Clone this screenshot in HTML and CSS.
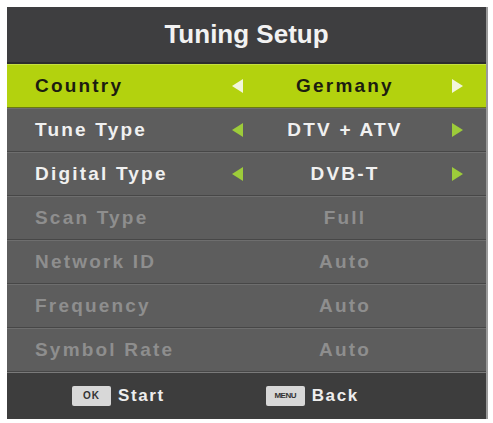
FILE: index.html
```html
<!DOCTYPE html>
<html lang="en">

<head>
    <meta charset="UTF-8">
    <meta name="viewport" content="width=device-width, initial-scale=1.0">
    <title>Tuning Setup</title>
    <link rel="stylesheet" href="styles.css">
</head>

<body>
    <div class="menu">
        <div class="menu-title">Tuning Setup</div>
        <div class="row active">
            <span class="label">Country</span>
            <span class="arrow left"></span>
            <span class="value">Germany</span>
            <span class="arrow right"></span>
        </div>
        <div class="row">
            <span class="label">Tune Type</span>
            <span class="arrow left"></span>
            <span class="value">DTV + ATV</span>
            <span class="arrow right"></span>
        </div>
        <div class="row">
            <span class="label">Digital Type</span>
            <span class="arrow left"></span>
            <span class="value">DVB-T</span>
            <span class="arrow right"></span>
        </div>
        <div class="row off">
            <span class="label">Scan Type</span>
            <span class="arrow"></span>
            <span class="value">Full</span>
            <span class="arrow"></span>
        </div>
        <div class="row off">
            <span class="label">Network ID</span>
            <span class="arrow"></span>
            <span class="value">Auto</span>
            <span class="arrow"></span>
        </div>
        <div class="row off">
            <span class="label">Frequency</span>
            <span class="arrow"></span>
            <span class="value">Auto</span>
            <span class="arrow"></span>
        </div>
        <div class="row off">
            <span class="label">Symbol Rate</span>
            <span class="arrow"></span>
            <span class="value">Auto</span>
            <span class="arrow"></span>
        </div>
        <div class="menu-foot">
            <div class="hint"><span class="key">OK</span>Start</div>
            <div class="hint"><span class="key menu-key">MENU</span>Back</div>
        </div>
    </div>
</body>

</html>
```

FILE: styles.css
```css
* {
    margin: 0;
    padding: 0;
    box-sizing: border-box;
}

body {
    background: #fff;
    font-family: "Liberation Sans", Arial, sans-serif;
    padding: 7px 5px 5px 7px;
}

.menu {
    width: 481px;
    background: #5d5d5d;
    border-right: 2px solid #9a9a9a;
}

.menu-title {
    height: 57px;
    background: #3e3e40;
    border-bottom: 2px solid #2d2d2d;
    color: #f2f2f2;
    font-size: 26px;
    font-weight: bold;
    text-align: center;
    line-height: 55px;
}

.row {
    height: 44px;
    display: grid;
    grid-template-columns: 182px 40px 176px 48px;
    align-items: center;
    padding-left: 28px;
    border-top: 1px solid #6e6e6e;
    border-bottom: 1px solid #474747;
    font-size: 19px;
    font-weight: bold;
    letter-spacing: 2.2px;
    color: #f0f0f0;
}

.row.active {
    background: #b3d20e;
    color: #1c1c10;
    border-top: 1px solid #c6e040;
    border-bottom: 1px solid #6a7a10;
}

.row.off {
    color: #8e8e8e;
}

.value {
    text-align: center;
}

.arrow {
    justify-self: center;
    width: 0;
    height: 0;
}

.arrow.left {
    border-top: 7px solid transparent;
    border-bottom: 7px solid transparent;
    border-right: 11px solid #9dcc3a;
}

.arrow.right {
    border-top: 7px solid transparent;
    border-bottom: 7px solid transparent;
    border-left: 11px solid #9dcc3a;
}

.active .arrow.left {
    border-right-color: #f2f6dc;
}

.active .arrow.right {
    border-left-color: #f2f6dc;
}

.menu-foot {
    height: 47px;
    background: #3d3d3d;
    border-top: 1px solid #7a7a7a;
    display: flex;
    align-items: center;
    padding-left: 65px;
    gap: 101px;
    color: #eee;
    font-size: 17px;
    font-weight: bold;
    letter-spacing: 1.6px;
}

.hint {
    display: flex;
    align-items: center;
}

.key {
    display: inline-block;
    width: 39px;
    height: 20px;
    margin-right: 7px;
    background: #d8d8d8;
    border-radius: 2px;
    color: #333;
    font-size: 10px;
    line-height: 20px;
    text-align: center;
    letter-spacing: 1px;
}

.menu-key {
    font-size: 8px;
    letter-spacing: -0.5px;
}
```
